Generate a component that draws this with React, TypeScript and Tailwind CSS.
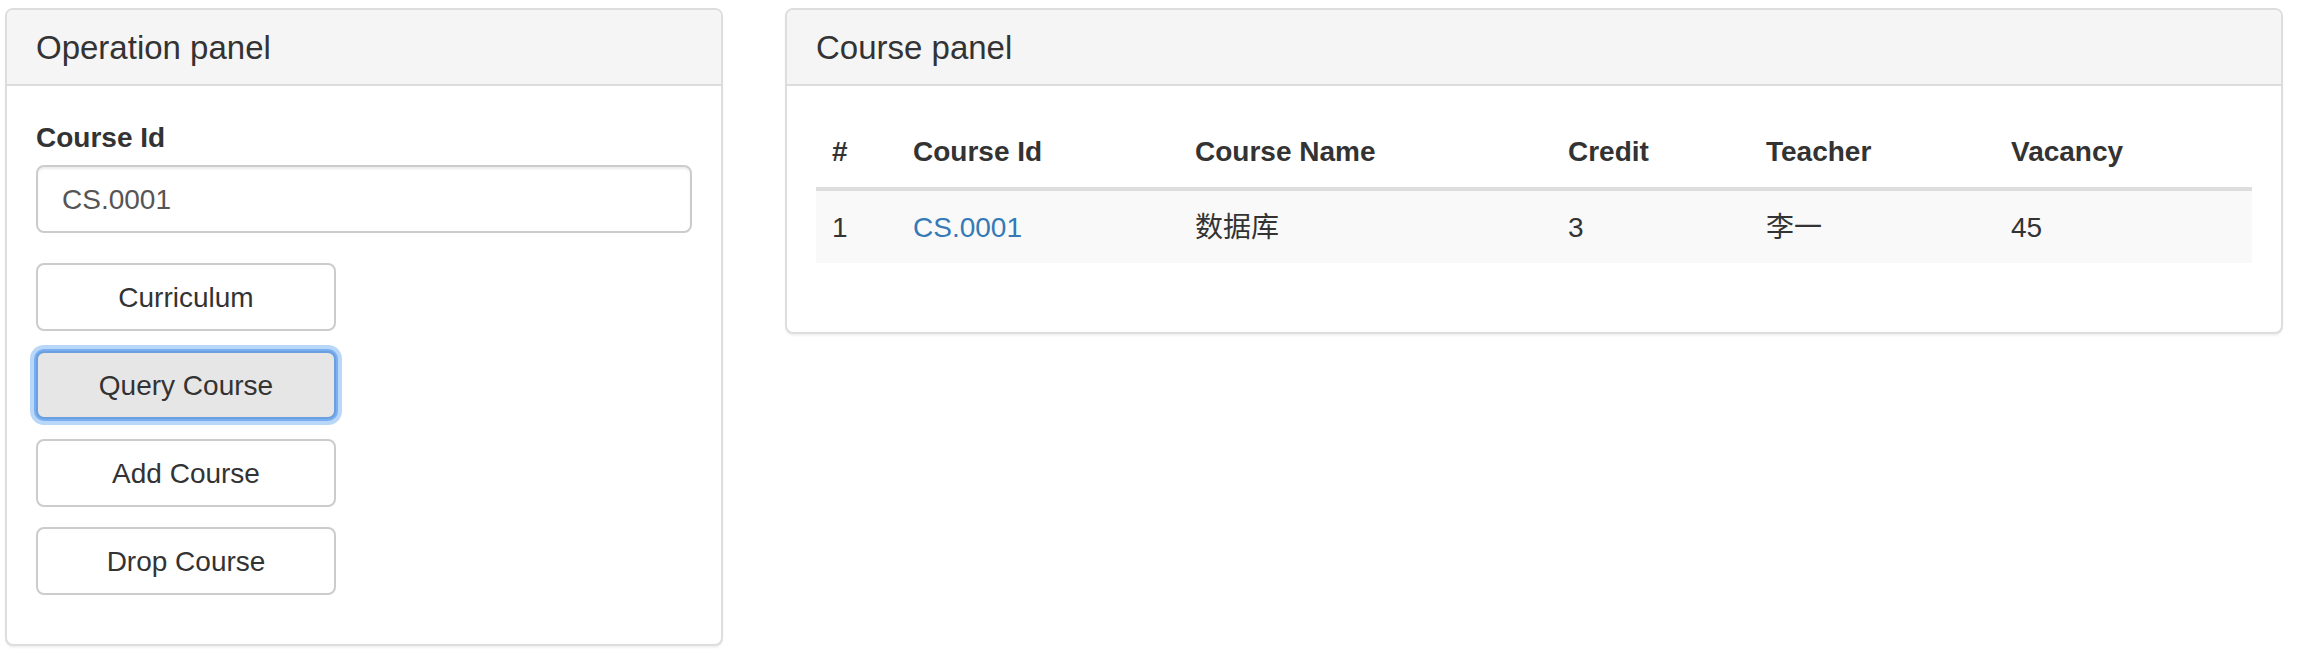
import type { ReactNode } from "react"

const font = "font-['Liberation_Sans','Noto_Sans_CJK_SC',Arial,sans-serif]"

interface PanelProps {
  title: string
  className?: string
  children: ReactNode
}

function Panel({ title, className, children }: PanelProps) {
  return (
    <section
      className={`rounded-[8px] border-2 border-[#dddddd] bg-white shadow-[0_2px_2px_rgba(0,0,0,0.05)] ${className ?? ""}`}
    >
      <header className="rounded-t-[6px] border-b-2 border-[#dddddd] bg-[#f5f5f5] px-[29px] pb-[18px] pt-[20px]">
        <h3 className="m-0 text-[33px] leading-[36px] text-[#333333]">{title}</h3>
      </header>
      <div className="p-[29px]">{children}</div>
    </section>
  )
}

const actions = ["Curriculum", "Query Course", "Add Course", "Drop Course"]

const rows = [
  { no: "1", id: "CS.0001", name: "数据库", credit: "3", teacher: "李一", vacancy: "45" },
]

export default function App() {
  return (
    <div className={`${font} flex min-h-[652px] w-[2302px] items-start bg-white pl-[5px] pt-[8px] text-[28px] leading-[40px] text-[#333333]`}>
      <Panel title="Operation panel" className="w-[718px]">
        <label className="mb-[10px] block h-[40px] pt-[3px] font-bold">Course Id</label>
        <input
          readOnly
          value="CS.0001"
          className="mt-[1px] block h-[68px] w-full rounded-[8px] border-2 border-[#cccccc] px-[24px] pt-[2px] text-[28px] text-[#555555] shadow-[inset_0_2px_2px_rgba(0,0,0,0.075)] outline-none"
        />
        <div className="mt-[30px] flex flex-col gap-[20px] pb-[20px]">
          {actions.map((label) => {
            const active = label === "Query Course"
            return (
              <button
                key={label}
                type="button"
                className={
                  active
                    ? "h-[68px] w-[300px] rounded-[8px] border-2 border-[#6a9fe0] bg-[#e6e6e6] pt-[2px] text-[28px] text-[#333333] shadow-[0_0_0_2px_#79aef0,0_0_0_6px_#b9d7f8]"
                    : "h-[68px] w-[300px] rounded-[8px] border-2 border-[#cccccc] bg-white pt-[2px] text-[28px] text-[#333333]"
                }
              >
                {label}
              </button>
            )
          })}
        </div>
      </Panel>

      <Panel title="Course panel" className="ml-[62px] w-[1498px]">
        <table className="mb-[40px] w-full table-fixed border-collapse text-left">
          <colgroup>
            <col className="w-[81px]" />
            <col className="w-[282px]" />
            <col className="w-[373px]" />
            <col className="w-[198px]" />
            <col className="w-[245px]" />
            <col />
          </colgroup>
          <thead>
            <tr className="border-b-4 border-[#dddddd]">
              {["#", "Course Id", "Course Name", "Credit", "Teacher", "Vacancy"].map((h) => (
                <th key={h} className="px-[16px] pb-[15px] pt-[17px] align-bottom font-bold">
                  {h}
                </th>
              ))}
            </tr>
          </thead>
          <tbody>
            {rows.map((r) => (
              <tr key={r.no} className="bg-[#f9f9f9]">
                <td className="px-[16px] pb-[15px] pt-[17px]">{r.no}</td>
                <td className="px-[16px] pb-[15px] pt-[17px]">
                  <a className="text-[#337ab7]">{r.id}</a>
                </td>
                <td className="px-[16px] pb-[15px] pt-[17px]">{r.name}</td>
                <td className="px-[16px] pb-[15px] pt-[17px]">{r.credit}</td>
                <td className="px-[16px] pb-[15px] pt-[17px]">{r.teacher}</td>
                <td className="px-[16px] pb-[15px] pt-[17px]">{r.vacancy}</td>
              </tr>
            ))}
          </tbody>
        </table>
      </Panel>
    </div>
  )
}
